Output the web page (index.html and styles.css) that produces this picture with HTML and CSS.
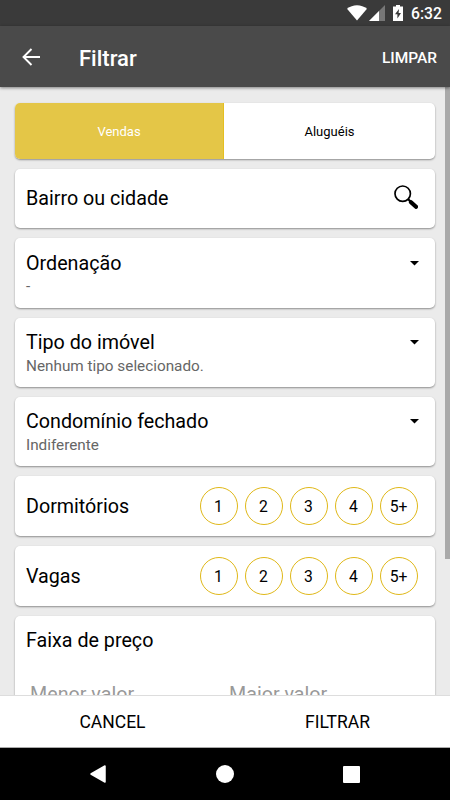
FILE: index.html
```html
<!DOCTYPE html>
<html lang="pt-BR">
<head>
    <meta charset="UTF-8">
    <meta name="viewport" content="width=device-width, initial-scale=1.0">
    <title>Filtrar</title>
    <link rel="stylesheet" href="styles.css">
</head>
<body>
    <div class="screen">
        <div class="status-bar">
            <svg class="wifi" width="20" height="16" viewBox="0 0 20 16"><path d="M0 3.8C5.5-1 14.500-1 20 3.800L10 15.500z" fill="#fff"/></svg>
            <svg class="signal" width="16" height="16" viewBox="0 0 16 16"><path d="M0 16L16 0V16z" fill="#777"/><path d="M0 16L10 6V16z" fill="#fff"/></svg>
            <svg class="battery" width="10" height="16" viewBox="0 0 10 16"><path d="M3 0h4v1.500h3V16H0V1.500h3z" fill="#fff"/><path d="M6 4L2 9.200h2.400V13.500L8 8H5.600z" fill="#3a3a3a"/></svg>
            <span class="clock">6:32</span>
        </div>

        <header class="header">
            <svg class="back" width="18" height="18" viewBox="0 0 18 18"><path d="M9.500 1L1.500 9l8 8M1.500 9H18" fill="none" stroke="#fff" stroke-width="1.900"/></svg>
            <h1>Filtrar</h1>
            <button class="clear">LIMPAR</button>
        </header>

        <main class="content">
            <form class="filters">
                <div class="card tabs">
                    <button type="button" class="tab active">Vendas</button>
                    <button type="button" class="tab">Aluguéis</button>
                </div>

                <div class="card row place">
                    <span class="label">Bairro ou cidade</span>
                    <svg class="search" width="24" height="24" viewBox="0 0 24 24"><circle cx="8.700" cy="8.700" r="7.700" fill="none" stroke="#000" stroke-width="1.700"/><path d="M14 14l3 3" stroke="#000" stroke-width="2.200"/><path d="M17 17.200l5 4.600" stroke="#000" stroke-width="4.200" stroke-linecap="round"/></svg>
                </div>

                <div class="card select">
                    <div class="label">Ordenação</div>
                    <svg class="caret" width="9" height="5" viewBox="0 0 9 5"><path d="M0 0h9L4.500 4.600z"/></svg>
                    <div class="value">-</div>
                </div>

                <div class="card select">
                    <div class="label">Tipo do imóvel</div>
                    <svg class="caret" width="9" height="5" viewBox="0 0 9 5"><path d="M0 0h9L4.500 4.600z"/></svg>
                    <div class="value">Nenhum tipo selecionado.</div>
                </div>

                <div class="card select">
                    <div class="label">Condomínio fechado</div>
                    <svg class="caret" width="9" height="5" viewBox="0 0 9 5"><path d="M0 0h9L4.500 4.600z"/></svg>
                    <div class="value">Indiferente</div>
                </div>

                <div class="card row">
                    <span class="label">Dormitórios</span>
                    <div class="options">
                        <button type="button">1</button>
                        <button type="button">2</button>
                        <button type="button">3</button>
                        <button type="button">4</button>
                        <button type="button">5+</button>
                    </div>
                </div>

                <div class="card row">
                    <span class="label">Vagas</span>
                    <div class="options">
                        <button type="button">1</button>
                        <button type="button">2</button>
                        <button type="button">3</button>
                        <button type="button">4</button>
                        <button type="button">5+</button>
                    </div>
                </div>

                <div class="card price">
                    <div class="label">Faixa de preço</div>
                    <div class="fields">
                        <span>Menor valor</span>
                        <span>Maior valor</span>
                    </div>
                </div>
            </form>
            <div class="scrollbar"></div>
        </main>

        <footer class="actions">
            <button>CANCEL</button>
            <button>FILTRAR</button>
        </footer>

        <nav class="nav-bar">
            <svg width="16" height="18" viewBox="0 0 16 18"><path d="M15 1v16L1 9z" fill="#fff" stroke="#fff" stroke-width="1.500" stroke-linejoin="round"/></svg>
            <svg width="18" height="18" viewBox="0 0 18 18"><circle cx="9" cy="9" r="9" fill="#fff"/></svg>
            <svg width="17" height="17" viewBox="0 0 17 17"><rect width="17" height="17" rx="1" fill="#fff"/></svg>
        </nav>
    </div>
</body>
</html>
```

FILE: styles.css
```css
* { box-sizing: border-box; }
body { margin: 0; font-family: Roboto, "Liberation Sans", sans-serif; color: #000; }
button { padding: 0; border: none; background: none; font-family: inherit; color: inherit; cursor: pointer; }
svg { display: block; flex: none; }

.screen { display: flex; flex-direction: column; width: 450px; height: 800px; overflow: hidden; }

.status-bar { display: flex; align-items: flex-start; height: 26px; flex: none; padding: 5px 9px 0 347px; background: #3a3a3a; color: #fff; }
.signal { margin-left: 2px; }
.battery { margin-left: 8px; }
.clock { margin-left: 8px; font-size: 15.700px; font-weight: 500; line-height: 18px; }

.header { display: flex; align-items: center; height: 61px; flex: none; padding: 0 13px 0 22px; background: #4a4a4a; color: #fff; box-shadow: 0 1px 3px rgba(0, 0, 0, 0.45); z-index: 1; }
.header h1 { margin: 3px 0 0 39px; font-size: 22px; font-weight: 500; }
.clear { margin: 2px 0 0 auto; font-size: 15.500px; font-weight: 500; }

.content { display: flex; flex: 1; min-height: 0; overflow: hidden; background: #ebebeb; }
.filters { width: 420px; margin: 16px 10px 0 15px; }
.scrollbar { width: 5px; height: 472px; background: #a9a9a9; }

.card { margin-bottom: 10px; background: #fff; border-radius: 5px; box-shadow: 0 1px 2px rgba(0, 0, 0, 0.4); }
.label { font-size: 19.700px; line-height: 24px; }
.value { font-size: 15.300px; line-height: 20px; color: #666; }

.tabs { display: flex; height: 56px; overflow: hidden; }
.tab { flex: 1; font-size: 13px; }
.tab.active { flex: 0 0 209px; background: #e4c647; color: #fff; border-right: 1px solid #e5bf20; }

.row { display: flex; align-items: center; justify-content: space-between; height: 60px; padding: 0 17.500px 0 11px; }
.row .label { padding-top: 2px; }
.place { height: 59.300px; padding: 0 17px 1px 11px; }
.search { margin-top: -2px; }

.select { display: grid; grid-template-columns: 1fr 9px; row-gap: 0.500px; align-content: start; align-items: center; height: 69.300px; padding: 13.500px 16px 0 11px; }
.caret { margin-top: -1px; }

.options { display: flex; gap: 7px; }
.options button { width: 38px; height: 38px; border: 1px solid #e0b818; border-radius: 50%; font-size: 15.700px; }

.price { height: 140px; padding: 13px 11px 0; }
.fields { display: grid; grid-template-columns: 199px 1fr; margin-top: 30px; padding-left: 4px; font-size: 19.700px; line-height: 24px; color: #999; }

.actions { display: flex; flex: none; height: 53px; background: #fff; border-top: 1px solid #ddd; border-bottom: 1px solid #aaa; }
.actions button { flex: 1; font-size: 17.500px; }

.nav-bar { display: flex; align-items: center; flex: none; height: 52px; padding: 0 90px; justify-content: space-between; background: #000; }
```
